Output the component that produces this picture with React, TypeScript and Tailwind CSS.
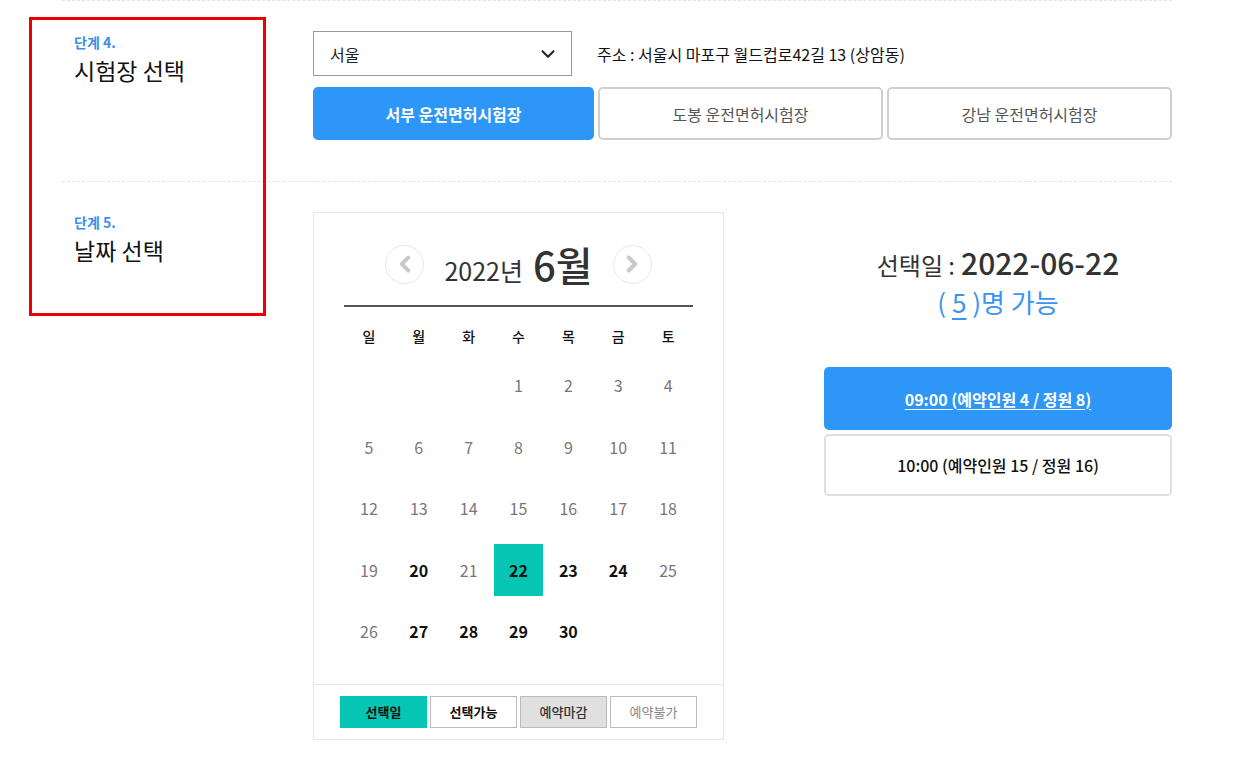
import { ChevronDown, ChevronLeft, ChevronRight } from 'lucide-react'

const CENTERS = ['서부 운전면허시험장', '도봉 운전면허시험장', '강남 운전면허시험장']
const WEEKDAYS = ['일', '월', '화', '수', '목', '금', '토']
// June 2022 starts on Wednesday
const BOLD_DAYS = [20, 22, 23, 24, 27, 28, 29, 30]
const SELECTED = 22

function buildWeeks() {
  const cells: (number | null)[] = [null, null, null]
  for (let d = 1; d <= 30; d++) cells.push(d)
  while (cells.length % 7) cells.push(null)
  const weeks: (number | null)[][] = []
  for (let i = 0; i < cells.length; i += 7) weeks.push(cells.slice(i, i + 7))
  return weeks
}

function StepLabel({ step, title }: { step: string; title: string }) {
  return (
    <div className="w-[251px] shrink-0 pl-[12px]">
      <div className="text-[14px] font-bold leading-[18px] text-[#3b8fe9]">{step}</div>
      <div className="mt-[3px] text-[23px] leading-[32px] text-[#111]">{title}</div>
    </div>
  )
}

function Calendar() {
  const weeks = buildWeeks()
  return (
    <div className="w-[411px] shrink-0 border border-[#e6e6e6]">
      <div className="px-[30px] pt-[26px]">
        <div className="flex items-center justify-center gap-[20px] pb-[15px]">
          <button className="flex h-[39px] w-[39px] items-center justify-center rounded-full border border-[#e8e8e8]">
            <ChevronLeft size={26} strokeWidth={3.6} color="#c9c9c9" />
          </button>
          <div className="flex items-baseline gap-[10px] text-[#333]">
            <span className="text-[25px]">2022년</span>
            <span className="text-[40px] font-medium leading-[50px]">6월</span>
          </div>
          <button className="flex h-[39px] w-[39px] items-center justify-center rounded-full border border-[#e8e8e8]">
            <ChevronRight size={26} strokeWidth={3.6} color="#c9c9c9" />
          </button>
        </div>
        <div className="h-[2px] bg-[#555]" />
        <div className="grid h-[48px] grid-cols-7 items-center pt-[11px] text-center text-[14px] font-medium text-[#111]">
          {WEEKDAYS.map(w => (
            <span key={w}>{w}</span>
          ))}
        </div>
        <div className="pb-[22px]">
          {weeks.map((week, wi) => (
            <div key={wi} className="grid h-[61.5px] grid-cols-7 items-center">
              {week.map((d, di) => (
                <div key={di} className="flex justify-center">
                  {d === null ? (
                    <span className="h-[52px] w-[50px]" />
                  ) : d === SELECTED ? (
                    <span className="flex h-[52px] w-[50px] items-center justify-center bg-[#05c5b3] text-[16px] font-bold text-[#111]">
                      {d}
                    </span>
                  ) : BOLD_DAYS.includes(d) ? (
                    <span className="flex h-[52px] w-[50px] items-center justify-center text-[16px] font-bold text-[#111]">
                      {d}
                    </span>
                  ) : (
                    <span className="flex h-[52px] w-[50px] items-center justify-center text-[16px] text-[#777]">
                      {d}
                    </span>
                  )}
                </div>
              ))}
            </div>
          ))}
        </div>
      </div>
      <div className="flex justify-center gap-[3px] border-t border-[#e6e6e6] pb-[11px] pt-[11px] text-[13px]">
        <span className="flex h-[32px] w-[87px] items-center justify-center bg-[#05c5b3] font-bold text-[#111]">선택일</span>
        <span className="flex h-[32px] w-[87px] items-center justify-center border border-[#bbb] bg-white font-bold text-[#111]">선택가능</span>
        <span className="flex h-[32px] w-[87px] items-center justify-center border border-[#bbb] bg-[#e0e0e0] font-medium text-[#333]">예약마감</span>
        <span className="flex h-[32px] w-[87px] items-center justify-center border border-[#bbb] bg-white text-[#888]">예약불가</span>
      </div>
    </div>
  )
}

export default function App() {
  return (
    <div className="relative min-h-[766px] bg-white font-['Noto_Sans_CJK_KR','Noto_Sans',sans-serif] text-[#222]">
      <div className="ml-[62px] w-[1110px] border-t border-dashed border-[#e3e3e3]">
        {/* ── 단계 4 ── */}
        <div className="flex border-b border-dashed border-[#e3e3e3] pb-[41px] pt-[30px]">
          <div className="pt-[2px]">
            <StepLabel step="단계 4." title="시험장 선택" />
          </div>
          <div className="flex-1">
            <div className="flex items-center gap-[25px]">
              <div className="flex h-[45px] w-[259px] items-center justify-between border border-[#999] pl-[16px] pr-[12px] text-[16px] text-[#222]">
                <span>서울</span>
                <ChevronDown size={22} strokeWidth={2.2} color="#222" />
              </div>
              <span className="text-[16px] text-[#111]">주소 : 서울시 마포구 월드컵로42길 13 (상암동)</span>
            </div>
            <div className="mt-[11px] flex gap-[4px]">
              {CENTERS.map((c, i) =>
                i === 0 ? (
                  <button key={c} className="h-[53px] flex-1 rounded-[5px] bg-[#2d96f6] text-[16px] font-bold text-white">
                    {c}
                  </button>
                ) : (
                  <button key={c} className="h-[53px] flex-1 rounded-[5px] border-2 border-[#cfcfcf] bg-white text-[16px] text-[#555]">
                    {c}
                  </button>
                )
              )}
            </div>
          </div>
        </div>

        {/* ── 단계 5 ── */}
        <div className="flex pt-[30px]">
          <div className="pt-[1px]">
            <StepLabel step="단계 5." title="날짜 선택" />
          </div>
          <Calendar />
          <div className="ml-[100px] w-[348px] text-center">
            <div className="mt-[28px] flex items-baseline justify-center gap-[6px] text-[#333]">
              <span className="text-[24px]">선택일 :</span>
              <span className="text-[30px] font-medium">2022-06-22</span>
            </div>
            <div className="mt-[-3px] text-[26px] text-[#3a94f0]">
              ( <span className="underline underline-offset-[5px]">5</span> )명 가능
            </div>
            <div className="mt-[46px] flex flex-col gap-[4px]">
              <button className="h-[63px] rounded-[5px] bg-[#2d96f6] text-[16px] font-bold text-white underline underline-offset-[3px]">
                09:00 (예약인원 4 / 정원 8)
              </button>
              <button className="h-[62px] rounded-[5px] border-2 border-[#dedede] bg-white text-[16px] font-medium text-[#111]">
                10:00 (예약인원 15 / 정원 16)
              </button>
            </div>
          </div>
        </div>
      </div>

      {/* highlight overlay */}
      <div className="pointer-events-none absolute left-[29px] top-[17px] h-[299px] w-[237px] border-[3px] border-[#ee0000]" />
    </div>
  )
}
